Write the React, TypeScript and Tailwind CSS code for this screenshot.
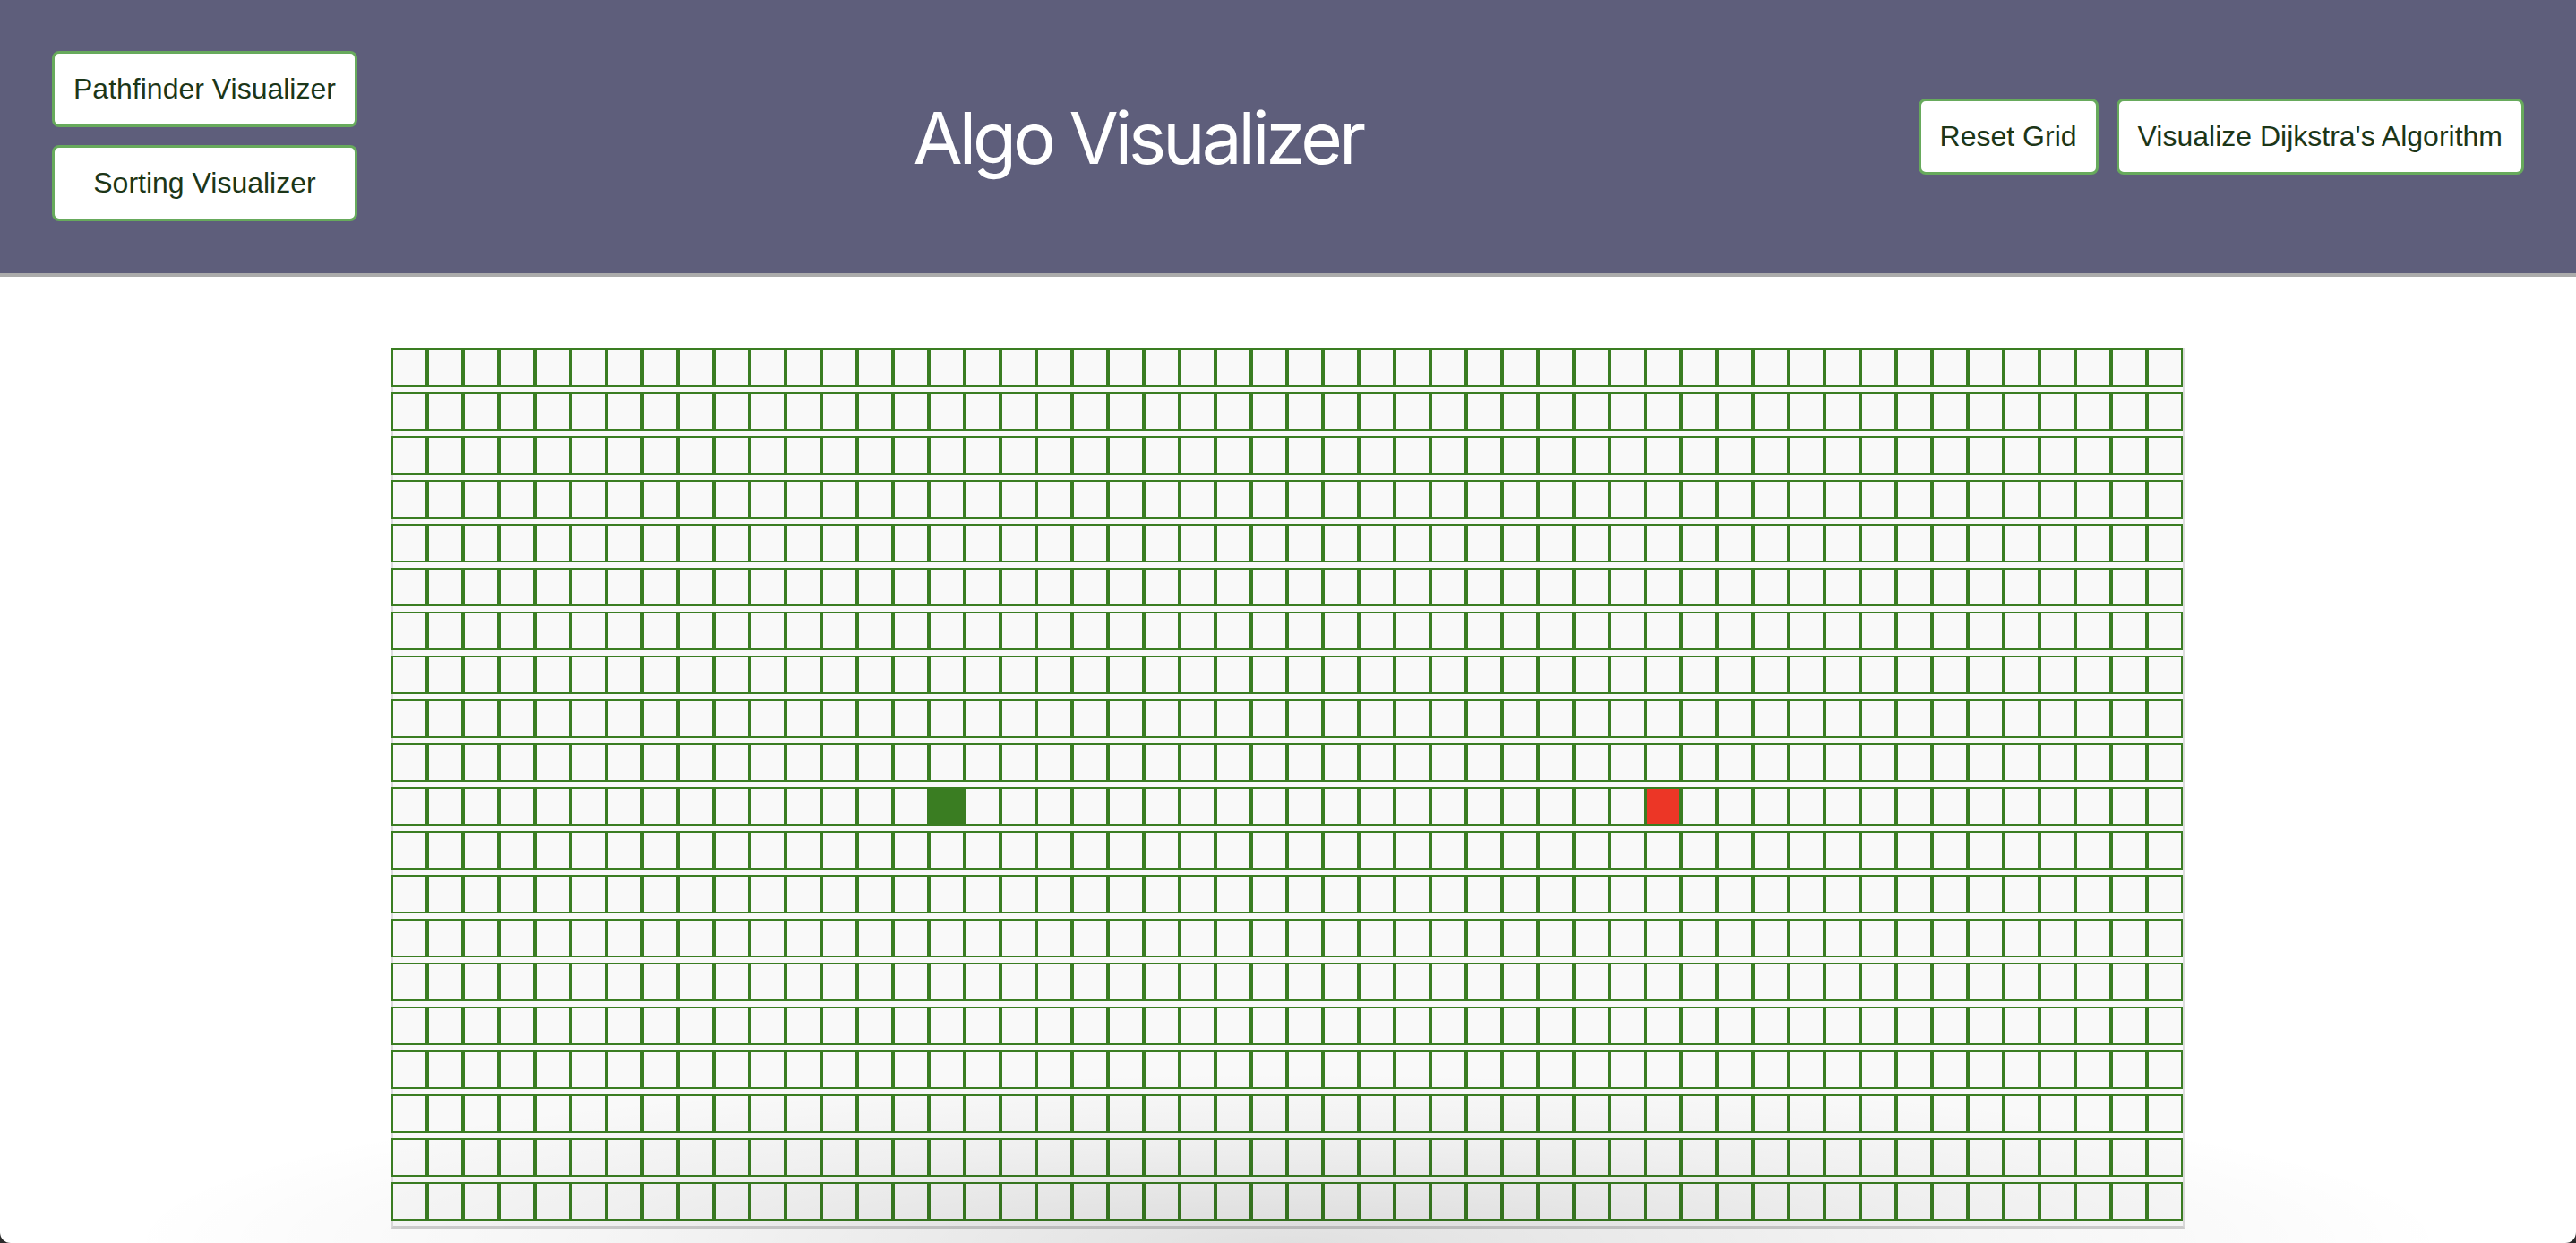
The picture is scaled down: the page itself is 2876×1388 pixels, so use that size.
import React from "react";

const ROWS = 20;
const COLS = 50;
const START = { r: 10, c: 15 };
const TARGET = { r: 10, c: 35 };

function Button({ children, className = "" }: { children: React.ReactNode; className?: string }) {
  return (
    <button
      className={
        "bg-white border-[3px] border-[#67aa5c] rounded-lg px-[21px] py-[21px] text-[32px] leading-[37px] text-[#1c3618] whitespace-nowrap " +
        className
      }
      style={{ fontFamily: '"Liberation Sans", Arial, sans-serif' }}
    >
      {children}
    </button>
  );
}

export default function App() {
  const rows = Array.from({ length: ROWS }, (_, r) => r);
  const cols = Array.from({ length: COLS }, (_, c) => c);
  return (
    <div className="h-[1388px] w-full bg-[#2b2b2b]">
      <div
        className="relative h-full w-full bg-white rounded-b-[12px] overflow-hidden"
        style={{ fontFamily: '"Liberation Sans", Arial, sans-serif' }}
      >
        <header className="h-[309px] bg-[#5e5e7b] border-b-4 border-[#ababab] flex items-center justify-between px-[58px]">
          <div className="flex flex-col gap-[20px] -mt-[2px]">
            <Button>Pathfinder Visualizer</Button>
            <Button>Sorting Visualizer</Button>
          </div>
          <h1
            className="text-white text-[80px] leading-none font-normal tracking-[-0.05em] mt-[2px]"
            style={{ fontFamily: 'Inter, "Liberation Sans", sans-serif' }}
          >
            Algo Visualizer
          </h1>
          <div className="flex gap-[20px]">
            <Button>Reset Grid</Button>
            <Button>Visualize Dijkstra's Algorithm</Button>
          </div>
        </header>
        <main className="flex justify-center pt-[80px]">
          <div className="border-x-2 border-b-[3px] border-x-[#dcdcdc] border-b-[#cfcfcf] bg-[#f9f9f9]">
            {rows.map((r) => (
              <div key={r} className="flex h-[43px] mb-[6px] -ml-[2px]">
                {cols.map((c) => {
                  const isStart = r === START.r && c === START.c;
                  const isTarget = r === TARGET.r && c === TARGET.c;
                  const bg = isStart ? "bg-[#3a7d22]" : isTarget ? "bg-[#ec3626]" : "bg-[#f9f9f9]";
                  return <div key={c} className={"w-[40px] h-[43px] shrink-0 border-2 border-[#3a7d22] " + bg} />;
                })}
              </div>
            ))}
          </div>
        </main>
        <div className="pointer-events-none absolute left-0 right-0 bottom-0 h-[240px] bg-[radial-gradient(1300px_190px_at_50%_100%,rgba(0,0,0,0.12),rgba(0,0,0,0.04)_60%,rgba(0,0,0,0)_100%)]" />
      </div>
    </div>
  );
}
